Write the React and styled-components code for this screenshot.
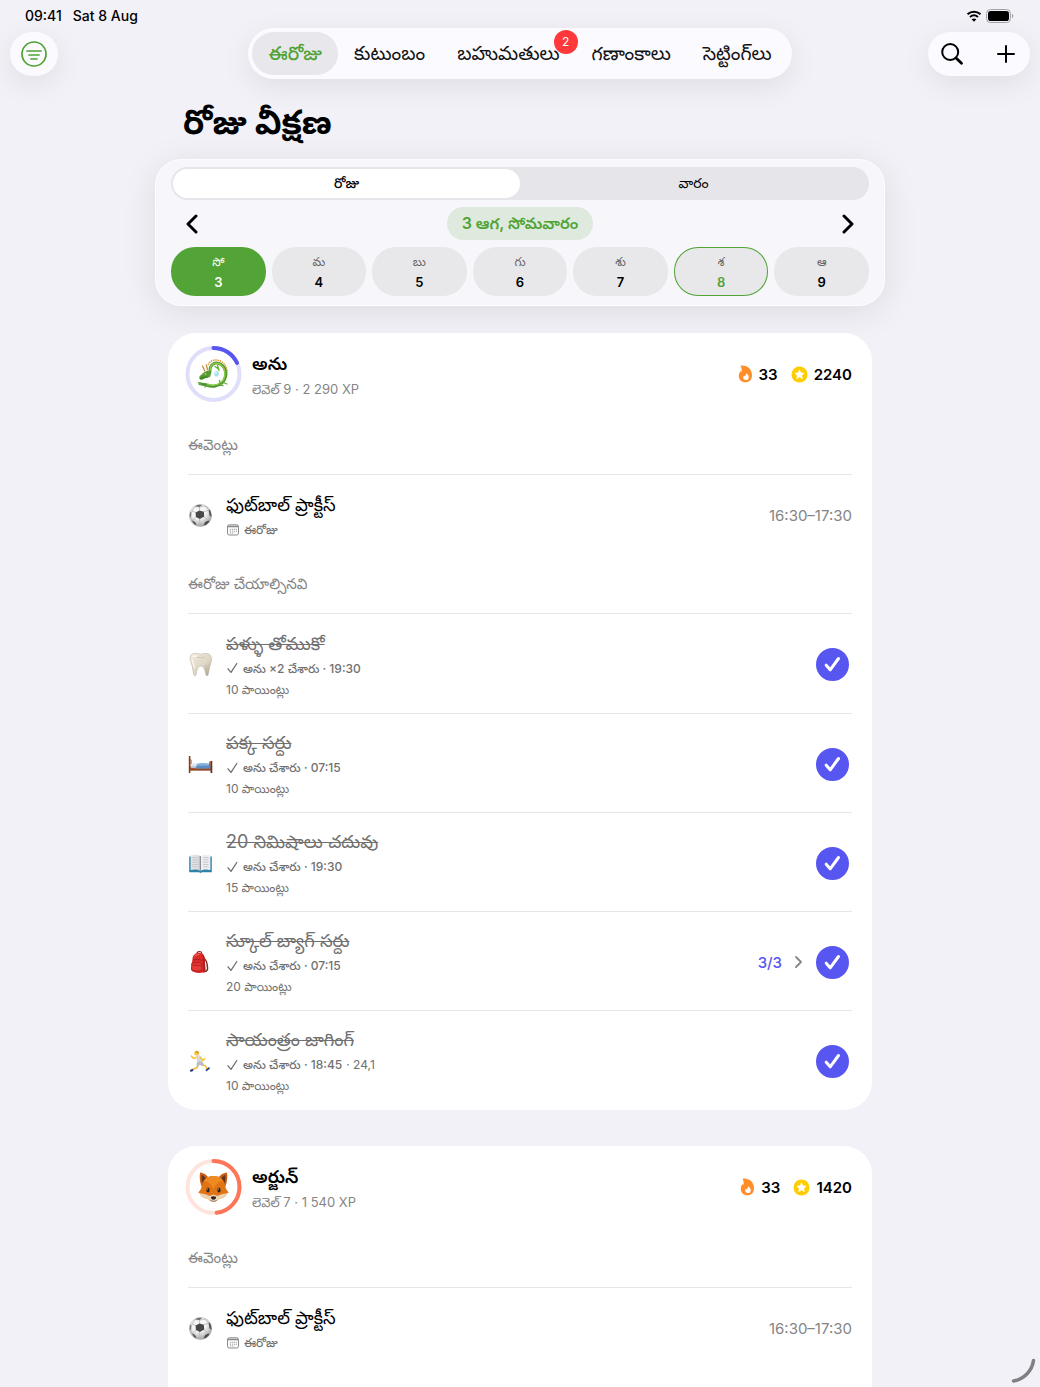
import { useState } from 'react';
import styled, { createGlobalStyle } from 'styled-components';

const GlobalStyle = createGlobalStyle`
    * {
        box-sizing: border-box;
    }
    body {
        margin: 0;
        background: #f2f1f7;
        color: #000;
        font-family: Inter, "Noto Sans Telugu", "Noto Sans", sans-serif;
        -webkit-font-smoothing: antialiased;
    }
    button {
        font: inherit;
        color: inherit;
        border: 0;
        padding: 0;
        background: none;
        cursor: pointer;
    }
    h1, h2, h3, p, ul {
        margin: 0;
        padding: 0;
        font-weight: inherit;
    }
    svg {
        display: block;
        flex: none;
    }
`;

const Page = styled.div`
    display: flex;
    flex-direction: column;
    min-height: 100vh;
    overflow: hidden;
`;

const StatusBar = styled.div`
    display: flex;
    align-items: center;
    justify-content: space-between;
    height: 28px;
    padding: 3px 26px 0 25px;
    font-size: 14px;
    font-weight: 500;
    div {
        display: flex;
        align-items: center;
        gap: 11px;
    }
    div:last-child {
        gap: 4px;
    }
`;

const TopBar = styled.header`
    display: grid;
    grid-template-columns: 1fr auto 1fr;
    align-items: center;
    padding: 0 10px;
`;

const Pill = styled.div`
    display: flex;
    align-items: center;
    background: #fbfaff;
    border-radius: 26px;
    box-shadow: 0 8px 30px rgba(0, 0, 0, 0.08);
`;

const Tabs = styled(Pill).attrs({ as: 'nav' })`
    height: 51px;
    padding: 4px;
`;

const Tab = styled.a`
    position: relative;
    display: flex;
    align-items: center;
    height: 43px;
    padding: 0 16px;
    border-radius: 22px;
    font-size: 19px;
    font-weight: ${(props) => (props.$active ? '500' : '400')};
    line-height: 24px;
    text-decoration: none;
    white-space: nowrap;
    color: ${(props) => (props.$active ? '#4fa234' : '#111')};
    background: ${(props) => (props.$active ? '#e8e7ec' : 'transparent')};
`;

const Badge = styled.span`
    position: absolute;
    top: -2px;
    right: -2px;
    width: 24px;
    height: 24px;
    border-radius: 50%;
    background: #ff383c;
    color: #fff;
    font-size: 12px;
    font-weight: 400;
    text-align: center;
`;

const Actions = styled(Pill)`
    justify-self: ${(props) => props.$side};
    height: 44px;
    button {
        display: grid;
        place-items: center;
        width: 48px;
        height: 44px;
    }
    button + button {
        margin-left: 6px;
    }
`;

const Main = styled.main`
    display: flex;
    flex: 1;
    flex-direction: column;
    width: 100%;
    max-width: 730px;
    margin: 0 auto;
`;

const Title = styled.h1`
    height: 80px;
    padding: 15px 28px 0;
    font-size: 34px;
    font-weight: 700;
    line-height: 56px;
`;

const Picker = styled.section`
    display: flex;
    flex-direction: column;
    gap: 7px;
    padding: 7px 15px 9px;
    border: 1px solid #fdfdff;
    border-radius: 26px;
    background: #f7f6fb;
    box-shadow: 0 6px 36px rgba(0, 0, 0, 0.09);
`;

const Segments = styled.div`
    display: grid;
    grid-template-columns: 1fr 1fr;
    padding: 2px;
    border-radius: 17px;
    background: #e6e5ea;
`;

const Segment = styled.button`
    height: 29px;
    padding-bottom: 2px;
    border-radius: 15px;
    font-size: 14px;
    font-weight: ${(props) => (props.$active ? '500' : '400')};
    line-height: 24px;
    background: ${(props) => (props.$active ? '#fff' : 'transparent')};
`;

const DateRow = styled.div`
    display: flex;
    align-items: center;
    justify-content: space-between;
    button {
        display: grid;
        place-items: center;
        width: 42px;
        height: 33px;
    }
`;

const DateLabel = styled.h2`
    height: 33px;
    padding: 0 15px;
    border-radius: 17px;
    background: #deeadd;
    color: #4fa234;
    font-size: 16px;
    font-weight: 600;
    line-height: 33px;
`;

const Days = styled.div`
    display: grid;
    grid-template-columns: repeat(7, 1fr);
    gap: 6px;
`;

const Day = styled.button`
    display: flex;
    flex-direction: column;
    align-items: center;
    justify-content: center;
    height: 49px;
    border-radius: 24px;
    font-size: 13px;
    font-weight: 600;
    line-height: 20px;
    background: ${(props) => (props.$selected ? '#52a437' : '#e8e8eb')};
    color: ${(props) => (props.$selected ? '#fff' : props.$today ? '#4fa234' : '#000')};
    box-shadow: ${(props) => (props.$today ? 'inset 0 0 0 1px #52a437' : 'none')};
    small {
        font-size: 12px;
        font-weight: 400;
        color: ${(props) => (props.$selected ? '#fff' : '#666')};
    }
`;

const Card = styled.article`
    margin: 27px 13px 9px;
    padding: 13px 20px 1px;
    border-radius: 28px;
    background: #fff;
    &:last-child {
        flex: 1 0 auto;
        margin-bottom: -28px;
    }
`;

const CardHead = styled.header`
    display: flex;
    align-items: center;
    gap: 10px;
    margin: 0 0 17px -3px;
    height: 56px;
`;

const HeadText = styled.div`
    flex: 1;
    padding-top: 3px;
    h2 {
        font-size: 18px;
        font-weight: 600;
        line-height: 26px;
    }
    p {
        color: #858585;
        font-size: 13px;
        line-height: 24px;
    }
`;

const Stats = styled.div`
    display: flex;
    gap: 13px;
    font-size: 15px;
    font-weight: 600;
    span {
        display: flex;
        align-items: center;
        gap: 6px;
    }
`;

const SectionTitle = styled.h3`
    height: 56px;
    padding-top: 14px;
    border-bottom: 1px solid #e6e6e8;
    color: #858585;
    font-size: 15px;
    line-height: 24px;
`;

const List = styled.ul`
    list-style: none;
`;

const Row = styled.li`
    display: flex;
    align-items: center;
    gap: 13px;
    min-height: ${(props) => (props.$event ? '83px' : '99px')};
    padding: ${(props) => (props.$event ? '0 0 2px' : '2px 3px 0 0')};
    & + & {
        border-top: 1px solid #e6e6e8;
    }
    time {
        color: #858585;
        font-size: 15px;
    }
`;

const RowText = styled.div`
    flex: 1;
    color: #707070;
    h4 {
        margin: 0;
        color: ${(props) => (props.$done ? '#707070' : '#000')};
        font-size: 18px;
        font-weight: 400;
        line-height: 28px;
        text-decoration: ${(props) => (props.$done ? 'line-through 1px' : 'none')};
    }
    p {
        display: flex;
        align-items: center;
        gap: 4px;
        font-size: 12px;
        line-height: 21px;
    }
    b {
        font-weight: 500;
    }
`;

const Steps = styled.button`
    display: flex;
    align-items: center;
    gap: 12px;
    color: #5856f0;
    font-size: 15px;
    font-weight: 500;
`;

const CheckLabel = styled.label`
    display: grid;
    width: 33px;
    height: 33px;
    cursor: pointer;
    input, svg {
        grid-area: 1 / 1;
    }
    input {
        appearance: none;
        width: 33px;
        height: 33px;
        margin: 0;
        border: 2px solid #5856f0;
        border-radius: 50%;
    }
    input:checked {
        background: #5856f0;
    }
    svg {
        place-self: center;
        pointer-events: none;
    }
`;

const Corner = styled.svg`
    position: fixed;
    right: 4px;
    bottom: 3px;
`;

const line = { fill: 'none', strokeLinecap: 'round', strokeLinejoin: 'round' };

function Ball() {
    return (
        <svg width="25" height="25" viewBox="0 0 25 25">
            <defs>
                <radialGradient id="ballShade" cx="0.42" cy="0.32" r="0.7">
                    <stop offset="0.45" stopColor="#f6f6f6" />
                    <stop offset="1" stopColor="#a2a2a2" />
                </radialGradient>
                <clipPath id="ballClip"><circle cx="12.5" cy="12.5" r="11" /></clipPath>
            </defs>
            <circle cx="12.5" cy="12.5" r="11.1" fill="url(#ballShade)" stroke="#999" strokeWidth="0.4" />
            <g clipPath="url(#ballClip)">
                <path d="M11.5 7.5V4M8 9.500 4 8M15.500 8.800l5.500-1.800M16 13.600l4 4.200M11.500 15.800l.5 6M8 14l-3.500 4M4 8l-1.500 5L4.500 18l5 4h6l5-4 2-5-1.500-6-4-4-5 1-5-.5z" stroke="#b0b0b0" strokeWidth="0.700" fill="none" />
                <path d="M7.600 9.400 11.500 7.400l4.300 1.400.5 4.800-4.400 2.300-4-1.900z" fill="#48484a" />
                <path d="M6.800 3.300 11 1.200l3.500.6-3 2.200z" fill="#6d6d70" />
                <path d="M1.300 9.500 3 8.600l.2 4.200L1.500 15z" fill="#77777a" />
                <path d="M22.500 6.500l-1.800.6.700 5.200 2.600 2V9z" fill="#58585b" />
                <path d="M3.800 17.600l3 1.200 1.800 3-2.300-.4z" fill="#58585b" />
                <path d="M20.500 17.600l-3.300 1.300-1.600 3.300 2.600-.4 3.300-3.300z" fill="#4c4c4f" />
            </g>
        </svg>
    );
}

function Tooth() {
    return (
        <svg width="25" height="25" viewBox="0 0 25 25">
            <defs>
                <linearGradient id="toothShade" x1="0" y1="0" x2="1" y2="1">
                    <stop offset="0" stopColor="#f2ecdf" />
                    <stop offset="0.6" stopColor="#ddd5c5" />
                    <stop offset="1" stopColor="#a99a80" />
                </linearGradient>
            </defs>
            <path d="M4.4 2C7.600.6 9.600 2 12.500 2.200 15.400 2 17.800.6 20.800 2c3.200 1.700 3.200 6 1.900 9.400-1.500 3.700-1.700 8.400-2.600 11.400-.4 1.300-1.900 1.200-2.200-.1-.7-3-1.500-8.700-4.900-8.700s-4.300 4.600-5 8.700c-.3 1.400-1.800 1.300-2.200 0-.8-3-1-7.600-2.500-11.300C1.800 8 1.300 3.700 4.400 2z" fill="url(#toothShade)" stroke="#b3a78f" strokeWidth="0.500" />
            <path d="M5 4.600c1-.8 2.500-.8 4-.2M4.200 7.500c.2 3 1.600 4.500 2 8" stroke="#fbf7ee" strokeWidth="1.400" {...line} />
            <path d="M9 5c2 1 5 1 7 0M17.500 13c.3 2 .8 4 1.300 7" stroke="#c2b59e" strokeWidth="0.700" {...line} />
        </svg>
    );
}

function Bed() {
    return (
        <svg width="25" height="25" viewBox="0 0 25 25">
            <path d="M2 14.500h21v4H2z" fill="#a9522b" />
            <path d="M8 12c4-1.200 9-1.200 14-.2l1 4.400H7z" fill="#86b1de" />
            <path d="M7.500 13.700h15.500v2.800H7.500z" fill="#5b8cc2" />
            <path d="M2.800 12.300c1.500-1 4-1 5.800-.2v2.500H2.800z" fill="#dfe5ee" />
            <path d="M2.800 14.200h5v1.800h-5z" fill="#b9c6d8" />
            <path d="M.8 4h1.600v17H.8z" fill="#7d3d22" />
            <path d="M2.400 6l1.200 2.500v3.300l-1.200.6z" fill="#b5623a" />
            <path d="M22.500 9h1.800v12h-1.800z" fill="#6b331f" />
            <path d="M21.200 9.400h1.600v4.600h-1.600z" fill="#a9522b" />
            <path d="M2.600 17.900H22" stroke="#7d3d22" strokeWidth="0.800" />
        </svg>
    );
}

function Book() {
    return (
        <svg width="25" height="25" viewBox="0 0 25 25">
            <path d="M1.200 5.500h22.600v15.700H14l-1.500.8-1.500-.8H1.200z" fill="#2f83a8" />
            <path d="M2.600 4.300c3.800-1 7.200-.8 9.900.9v14.600c-2.900-1.500-6.300-1.600-9.900-.8z" fill="#e3e3e5" />
            <path d="M22.400 4.300c-3.800-1-7.200-.8-9.900.9v14.600c2.900-1.500 6.300-1.600 9.900-.8z" fill="#efeff1" />
            <path d="M10.500 4.600v14l2 1.200V5.200z" fill="#c2c4c8" />
            <path d="M12.500 5.200v14.600" stroke="#7c8288" strokeWidth="0.800" />
            <path d="M4.300 6.700c2-.4 3.800-.4 5.500.1M4.300 9c2-.4 3.800-.4 5.500.1M4.300 11.300c2-.4 3.800-.4 5.500.1M4.300 13.600c2-.4 3.800-.4 5.500.1M4.300 15.900c2-.4 3.800-.4 5.500.1M15 6.800c2-.5 3.800-.5 5.500-.1M15 9.100c2-.5 3.800-.5 5.500-.1M15 11.400c2-.5 3.800-.5 5.500-.1M15 13.700c2-.5 3.800-.5 5.500-.1M15 16c2-.5 3.800-.5 5.500-.1" stroke="#bbbdc1" strokeWidth="0.800" fill="none" />
        </svg>
    );
}

function Backpack() {
    return (
        <svg width="25" height="25" viewBox="0 0 25 25">
            <path d="M16.500 9c3 2 2.500 6 3 8.500.5 3-1.500 4.500-3.500 4" stroke="#7c2a22" strokeWidth="1.500" {...line} />
            <path d="M9 3.500c0-2.500 4.500-2.700 4.800-.2" stroke="#9c1d1c" strokeWidth="1.200" {...line} />
            <path d="M4.500 9C4.700 5 7.500 3 10.800 2.800c3.600-.2 5.700 2 6 6.200l.6 11.500c0 1.300-.8 1.800-2 2.100-3 .7-6.500.6-9.600-.6-1.500-.6-2.600-1.300-2.600-3z" fill="#da2b29" />
            <path d="M14.500 4c1.500 1.200 2.200 3 2.300 5l.6 11.500c0 1.300-.8 1.800-2 2.100z" fill="#b01f1f" />
            <path d="M3.800 13c3.300-.8 7.500-.6 9.900.5l.2 7c-3.300 1.200-7.200.8-10.400-.8z" fill="#e53a35" stroke="#9c1d1c" strokeWidth="0.700" />
            <path d="M5.200 10c2.700-1 5.800-.8 8.300.2M4.800 15.300c3-.4 5.500-.2 8.200.6" stroke="#8f1718" strokeWidth="0.600" {...line} />
            <path d="M6.800 6.200c1-1.200 2.400-1.600 4-1.700" stroke="#ff7a6e" strokeWidth="0.900" {...line} />
        </svg>
    );
}

function Runner() {
    return (
        <svg width="25" height="25" viewBox="0 0 25 25">
            <path d="M9.500 8 5.500 9.500 3.300 7" stroke="#fdc43b" strokeWidth="1.600" {...line} />
            <path d="M10.500 15 9 18.500 4.300 20.800" stroke="#f5b52f" strokeWidth="1.700" {...line} />
            <path d="M13.500 15.500l3.700 1.300 1.800 3" stroke="#fdc43b" strokeWidth="1.700" {...line} />
            <path d="M8.500 6.800c2-1 4.200-.4 5 1l.6 4.700-1.300 2-3.500-.8z" fill="#d5d9de" />
            <path d="M9 12.800l5-.6 2 3.300-1.700 1.700-2.700-1.400-1.100 1.700-2-1.200z" fill="#b9bec6" />
            <path d="M12.500 8.500l2.500 3.200 1.600-2.200" stroke="#fdc43b" strokeWidth="1.500" {...line} />
            <circle cx="8.500" cy="4.400" r="2.200" fill="#fdc43b" />
            <path d="M6.500 3.500C7 1.600 9.800 1.200 10.800 2.700c.7 1.100.3 2.300-.5 2.900-.2-1.200-1.200-1.600-3.800-2.100z" fill="#e0a52c" />
            <path d="M1.800 21.300l2.600-1.500 1.100 1.900-2.800 1.200zM17.500 20.900l3.500-2.800 1 1.500-3.800 2.900z" fill="#253a86" />
        </svg>
    );
}

function Dragon() {
    return (
        <svg x="11" y="11" width="34" height="34" viewBox="0 0 34 34">
            <path d="M11.500 8C14 2.500 20.500 1.500 25.300 5c6.500 4.500 6.500 13 2.700 18" stroke="#dc9a38" strokeWidth="1.500" strokeDasharray="1.500 0.800" fill="none" />
            <path d="M13.500 14C13 7.500 19 4 24.500 7.500c6 4 6.300 13.500.8 18.500-4 3.700-10.500 4-14.800 2.200-2.200-.9-4-.3-7-1.500" stroke="#4f9430" strokeWidth="3" {...line} />
            <path d="M13.800 13C13.500 7 19 4.500 24 7.500c5.500 3.700 6 13 .7 17.800-3.800 3.300-9.500 3.300-13.500 2" stroke="#8bcb4a" strokeWidth="1.500" {...line} />
            <path d="M8.300 14 6 9M11 12.500 9.800 8" stroke="#c98c3c" strokeWidth="1.300" {...line} />
            <path d="M2.800 19.500l4.200-3.800 4-2.200 4 2-1.500 4.500-4 .9-5 2.300-1.400-1.700z" fill="#569e33" />
            <path d="M3.500 21.500l4.500-1.300 3-.2" stroke="#2f6720" strokeWidth="0.800" {...line} />
            <circle cx="9" cy="17" r="0.800" fill="#f7d94c" />
            <ellipse cx="20" cy="16.800" rx="2.300" ry="2.800" fill="#a4e0ee" />
            <circle cx="19.400" cy="15.800" r="0.900" fill="#e9fbff" />
            <path d="M18.500 9.500l3.500 2.500M21 8.500l1.500 5M23 23.500l1 4.500 2.500.6M26.500 25.500l4 1.500M10.500 28.500l-2 1.500M4 27l-1.800-1.500" stroke="#66ad3a" strokeWidth="1.300" {...line} />
        </svg>
    );
}

function Fox() {
    return (
        <svg x="12" y="12" width="32" height="32" viewBox="0 0 32 32">
            <path d="M2.500 1.500c4 .4 7.500 3 9.300 6.500L4 15.500C2 10 2 5.500 2.500 1.500zM29.500 1.500c-4 .4-7.500 3-9.300 6.500L28 15.500c2-5.500 2-10 1.500-14z" fill="#c95d12" />
            <path d="M4.300 4c2 1 3.800 2.600 4.800 4.500L5 13C4 9.500 4 6.500 4.300 4zM27.700 4c-2 1-3.800 2.600-4.800 4.500l4.100 4.500c1-3.500 1-6.500.7-9z" fill="#5d3424" />
            <path d="M16 5c7 0 11.500 4.500 12 11 .2 2 2 4 3.300 5.500-1.300 1-2.600 1-2.600 1 .2 1.500.1 2-.7 2.800-3 2.200-6.500 2.400-8.500 4.200-2 1.800-5 1.800-7 0-2-1.800-5.500-2-8.500-4.200-.8-.8-.9-1.300-.7-2.800 0 0-1.300 0-2.600-1C2 20 3.800 18 4 16 4.500 9.500 9 5 16 5z" fill="#e27414" />
            <path d="M16 5c4.500 0 7.800 1.700 9.700 4.800C22 10 18.500 13 16 18c-2.500-5-6-8-9.700-8.200C8.200 6.700 11.500 5 16 5z" fill="#ee8a20" />
            <path d="M1.500 21.800c3 1 7 1.200 10.500 3.200l4-1.500 4 1.500c3.500-2 7.500-2.200 10.500-3.200-.6.700-1.800.7-1.800.7.2 1.500.1 2-.7 2.800-3 2.200-6.500 2.400-8.500 4.200-2 1.800-5 1.800-7 0-2-1.800-5.500-2-8.500-4.200-.8-.8-.9-1.300-.7-2.800 0 0-1.200 0-1.800-.7z" fill="#ecd3b4" />
            <ellipse cx="10.500" cy="19" rx="1.600" ry="2.600" fill="#26201f" />
            <ellipse cx="21.500" cy="19" rx="1.600" ry="2.600" fill="#26201f" />
            <circle cx="10.200" cy="18" r="0.500" fill="#fff" />
            <circle cx="21.200" cy="18" r="0.500" fill="#fff" />
            <path d="M13.400 26c1.500-1 3.700-1 5.200 0 .2 1.500-1.400 2.800-2.600 2.800s-2.800-1.300-2.600-2.800z" fill="#2a2322" />
            <path d="M13 29.600c2 .9 4 .9 6 0" stroke="#7d5d48" strokeWidth="0.700" {...line} />
        </svg>
    );
}

function Ring({ color, track, value, children }) {
    return (
        <svg width="57" height="56" viewBox="0 0 56 56">
            <circle cx="28" cy="28" r="26" fill="none" stroke={track} strokeWidth="4" />
            <circle cx="28" cy="28" r="26" pathLength="100" stroke={color} strokeWidth="4" strokeDasharray={`${value} 100`} transform="rotate(-90 28 28)" {...line} />
            {children}
        </svg>
    );
}

const Chevron = ({ flip }) => (
    <svg width="12" height="20" viewBox="0 0 12 20">
        <path d={flip ? 'M2 2l8 8-8 8' : 'M10 2l-8 8 8 8'} stroke="#000" strokeWidth="3" {...line} />
    </svg>
);

const Flame = () => (
    <svg width="15" height="18" viewBox="0 0 15 18">
        <path d="M2.500.7C8.500-.2 14 3.500 14 10.300c0 4.400-2.800 7-6.700 7S.8 14.700.8 11c0-2.200.8-3.700 1.900-4.900.1.500.4.8.8.9C3.900 4.500 3.600 2.300 2.500.7z" fill="#ff8d28" />
        <path d="M8.300 8.300c1.700 1.300 2.500 2.700 2.500 4.100 0 1.600-1.200 2.600-2.800 2.600s-2.800-1-2.800-2.500c0-.9.400-1.600.9-2.100.2.500.5.800.9.900.7-.9 1.200-1.800 1.300-3z" fill="#fff" />
    </svg>
);

const Coin = () => (
    <svg width="17" height="17" viewBox="0 0 17 17">
        <circle cx="8.500" cy="8.500" r="8" fill="#fc0" />
        <path d="M8.500 3.800l1.400 3 3.300.4-2.400 2.200.6 3.300-2.900-1.600-2.900 1.600.6-3.300-2.400-2.200 3.300-.4z" fill="#fff" stroke="#fff" strokeWidth="0.500" strokeLinejoin="round" />
    </svg>
);

const CalendarIcon = () => (
    <svg width="14" height="12" viewBox="0 0 14 12">
        <rect x="1.500" y="0.800" width="11" height="10.200" rx="1.800" fill="none" stroke="#8a8a8a" />
        <path d="M1.500 2.500h11" stroke="#8a8a8a" strokeWidth="1.600" />
        <path d="M3.800 5.300h7M3.800 7.200h7M3.800 9h4.500" stroke="#8a8a8a" strokeWidth="1" strokeDasharray="1 1" />
    </svg>
);

const SmallCheck = () => (
    <svg width="13" height="12" viewBox="0 0 13 12">
        <path d="M2 6.800l3 3.600L10.800 1.500" stroke="#707070" strokeWidth="1.300" {...line} />
    </svg>
);

const days = [
    ['సో', 3], ['మ', 4], ['బు', 5], ['గు', 6], ['శు', 7], ['శ', 8], ['ఆ', 9],
];

const tasks = [
    { icon: <Tooth />, title: 'పళ్ళు తోముకో', by: 'అను ×2 చేశారు · 19:30', points: 10 },
    { icon: <Bed />, title: 'పక్క సర్దు', by: 'అను చేశారు · 07:15', points: 10 },
    { icon: <Book />, title: '20 నిమిషాలు చదువు', by: 'అను చేశారు · 19:30', points: 15 },
    { icon: <Backpack />, title: 'స్కూల్ బ్యాగ్ సర్దు', by: 'అను చేశారు · 07:15', points: 20, steps: '3/3' },
    { icon: <Runner />, title: 'సాయంత్రం జాగింగ్', by: 'అను చేశారు · 18:45', extra: '· 24,1', points: 10 },
];

function TaskRow({ task }) {
    const [done, setDone] = useState(true);
    return (
        <Row>
            {task.icon}
            <RowText $done={done}>
                <h4>{task.title}</h4>
                <p><SmallCheck /><b>{task.by}</b>{task.extra}</p>
                <p>{task.points} పాయింట్లు</p>
            </RowText>
            {task.steps && (
                <Steps>
                    {task.steps}
                    <svg width="9" height="14" viewBox="0 0 9 14">
                        <path d="M2 2l5 5-5 5" stroke="#858585" strokeWidth="1.800" {...line} />
                    </svg>
                </Steps>
            )}
            <CheckLabel>
                <input type="checkbox" aria-label={task.title} checked={done} onChange={() => setDone(!done)} />
                <svg width="17" height="17" viewBox="0 0 17 17">
                    <path d="M2.200 9.200l4 4.600L14.500 2.500" stroke="#fff" strokeWidth="3" {...line} />
                </svg>
            </CheckLabel>
        </Row>
    );
}

function MemberCard({ name, level, streak, coins, ring, items = [] }) {
    return (
        <Card>
            <CardHead>
                {ring}
                <HeadText>
                    <h2>{name}</h2>
                    <p>{level}</p>
                </HeadText>
                <Stats>
                    <span><Flame />{streak}</span>
                    <span><Coin />{coins}</span>
                </Stats>
            </CardHead>
            <SectionTitle>ఈవెంట్లు</SectionTitle>
            <List>
                <Row $event>
                    <Ball />
                    <RowText>
                        <h4>ఫుట్‌బాల్ ప్రాక్టీస్</h4>
                        <p><CalendarIcon /><b>ఈరోజు</b></p>
                    </RowText>
                    <time>16:30–17:30</time>
                </Row>
            </List>
            {items.length > 0 && (
                <>
                    <SectionTitle>ఈరోజు చేయాల్సినవి</SectionTitle>
                    <List>
                        {items.map((task) => <TaskRow key={task.title} task={task} />)}
                    </List>
                </>
            )}
        </Card>
    );
}

export default function App() {
    const [mode, setMode] = useState('day');
    const [selected, setSelected] = useState(3);
    return (
        <>
            <GlobalStyle />
            <Page>
                <StatusBar>
                    <div><span>09:41</span><span>Sat 8 Aug</span></div>
                    <div>
                        <svg width="16" height="12" viewBox="0 0 16 12">
                            <path d="M1.500 4.300c3.800-3.500 9.200-3.500 13 0M4 7c2.400-2.100 5.600-2.100 8 0" stroke="#000" strokeWidth="1.900" fill="none" />
                            <path d="M8 11.700L5.600 9.300c1.400-1.200 3.400-1.200 4.800 0z" />
                        </svg>
                        <svg width="28" height="14" viewBox="0 0 28 14">
                            <rect x="0.500" y="0.500" width="24" height="13" rx="4" fill="none" stroke="#a3a2a7" />
                            <rect x="2" y="2" width="21" height="10" rx="2.800" />
                            <path d="M26 5c1.800.5 1.800 3.500 0 4z" fill="#a3a2a7" />
                        </svg>
                    </div>
                </StatusBar>
                <TopBar>
                    <Actions $side="start">
                        <button aria-label="Filter">
                            <svg width="26" height="26" viewBox="0 0 26 26">
                                <circle cx="13" cy="13" r="12" stroke="#4fa234" strokeWidth="1.700" fill="none" />
                                <path d="M6 10h14M8 14h10M10 18h6" stroke="#4fa234" strokeWidth="1.700" {...line} />
                            </svg>
                        </button>
                    </Actions>
                    <Tabs>
                        <Tab href="#today" $active>ఈరోజు</Tab>
                        <Tab href="#family">కుటుంబం</Tab>
                        <Tab href="#rewards">బహుమతులు<Badge>2</Badge></Tab>
                        <Tab href="#stats">గణాంకాలు</Tab>
                        <Tab href="#settings">సెట్టింగ్‌లు</Tab>
                    </Tabs>
                    <Actions $side="end">
                        <button aria-label="Search">
                            <svg width="24" height="24" viewBox="0 0 24 24">
                                <circle cx="10.200" cy="10" r="8" stroke="#000" strokeWidth="2" fill="none" />
                                <path d="M16 16l5.500 5.300" stroke="#000" strokeWidth="2.800" {...line} />
                            </svg>
                        </button>
                        <button aria-label="Add">
                            <svg width="18" height="18" viewBox="0 0 18 18">
                                <path d="M9 1v16M1 9h16" stroke="#000" strokeWidth="2" {...line} />
                            </svg>
                        </button>
                    </Actions>
                </TopBar>
                <Main>
                    <Title>రోజు వీక్షణ</Title>
                    <Picker>
                        <Segments>
                            <Segment $active={mode === 'day'} onClick={() => setMode('day')}>రోజు</Segment>
                            <Segment $active={mode === 'week'} onClick={() => setMode('week')}>వారం</Segment>
                        </Segments>
                        <DateRow>
                            <button aria-label="Previous"><Chevron /></button>
                            <DateLabel>3 ఆగ, సోమవారం</DateLabel>
                            <button aria-label="Next"><Chevron flip /></button>
                        </DateRow>
                        <Days>
                            {days.map(([label, date]) => (
                                <Day key={date} $selected={date === selected} $today={date === 8} onClick={() => setSelected(date)}>
                                    <small>{label}</small>
                                    {date}
                                </Day>
                            ))}
                        </Days>
                    </Picker>
                    <MemberCard
                        name="అను"
                        level="లెవెల్ 9 · 2 290 XP"
                        streak={33}
                        coins={2240}
                        ring={<Ring color="#5856f0" track="#dfdffb" value={18}><Dragon /></Ring>}
                        items={tasks}
                    />
                    <MemberCard
                        name="అర్జున్"
                        level="లెవెల్ 7 · 1 540 XP"
                        streak={33}
                        coins={1420}
                        ring={<Ring color="#ff7558" track="#ffe4de" value={48}><Fox /></Ring>}
                    />
                </Main>
                <Corner width="26" height="26" viewBox="0 0 26 26">
                    <path d="M23.500 2.500C22 13 14 21 3.500 23" stroke="#808083" strokeWidth="3.500" {...line} />
                </Corner>
            </Page>
        </>
    );
}
